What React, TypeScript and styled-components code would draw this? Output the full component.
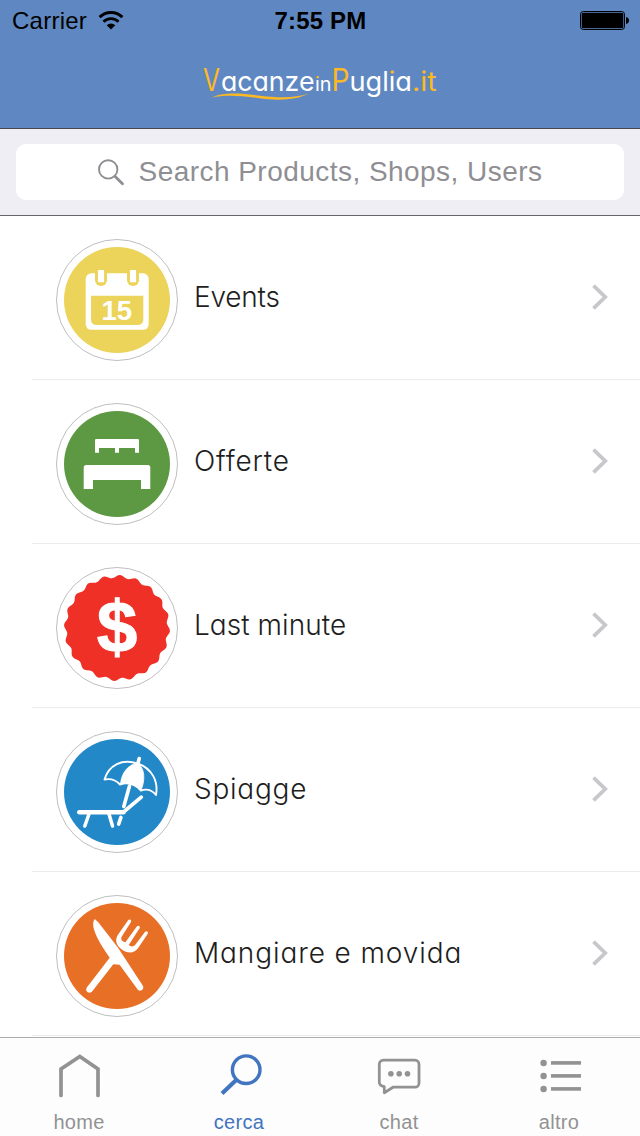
import React from 'react';
import styled, { createGlobalStyle } from 'styled-components';

const GlobalStyle = createGlobalStyle`
  * { box-sizing: border-box; }
  body { margin: 0; background: #fff; font-family: "Liberation Sans", Arial, sans-serif; }
  svg { display: block; flex: none; overflow: visible; }
`;

const Screen = styled.div`
  width: 640px;
  height: 1136px;
  display: flex;
  flex-direction: column;
  background: #fff;
  overflow: hidden;
`;

const Header = styled.header`
  height: 129px;
  background: #5f88c2;
  border-bottom: 1px solid #47484c;
`;

const StatusBar = styled.div`
  height: 40px;
  display: grid;
  grid-template-columns: 1fr auto 1fr;
  align-items: center;
  padding: 1px 11px 0 12px;
  font-size: 24px;
  color: #000;
`;

const Carrier = styled.div`
  display: flex;
  align-items: center;
  gap: 10.5px;
  letter-spacing: 0.25px;
`;

const Clock = styled.div`
  font-weight: 700;
  letter-spacing: 0.15px;
`;

const BatterySlot = styled.div`
  display: flex;
  justify-content: flex-end;
`;

const Brand = styled.div`
  display: flex;
  justify-content: center;
  padding-top: 20px;
`;

const LogoSvg = styled.svg`
  font-family: Inter, sans-serif;
  font-feature-settings: "cv11" 1;
`;

const SearchArea = styled.div`
  height: 87px;
  padding: 15px 16px;
  background: #efeef4;
  border-bottom: 1px solid #66656b;
`;

const SearchField = styled.div`
  height: 56px;
  border-radius: 10px;
  background: #fff;
  display: flex;
  align-items: center;
  justify-content: center;
  gap: 14px;
  color: #8e8e93;
  font-size: 28px;
  line-height: 32px;
  letter-spacing: 0.46px;
`;

const List = styled.main`
  height: 821px;
`;

const Row = styled.div`
  height: 164px;
  margin-left: 32px;
  padding: 23px 32px 0 24px;
  border-bottom: 1px solid #ececee;
  display: flex;
  align-items: flex-start;
`;

const Label = styled.div<{ $spacing: number }>`
  flex: 1;
  margin: 41px 0 0 16px;
  font-family: Inter, "Liberation Sans", sans-serif;
  font-size: 28px;
  line-height: 34px;
  font-weight: 300;
  font-feature-settings: "cv11" 1;
  letter-spacing: ${(p) => p.$spacing}px;
  color: #1e1e1e;
`;

const ChevronSlot = styled.div`
  padding-top: 45px;
`;

const TabBar = styled.nav`
  height: 99px;
  border-top: 1px solid #adadad;
  background: #fdfdfd;
  display: grid;
  grid-template-columns: repeat(4, 160px);
`;

const Tab = styled.div<{ $active?: boolean }>`
  display: flex;
  flex-direction: column;
  align-items: center;
  padding-top: 14px;
  gap: 10px;
  padding-right: 2px;
  font-size: 20px;
  line-height: 24px;
  letter-spacing: 0.3px;
  color: ${(p) => (p.$active ? '#4275c0' : '#929292')};
`;

const Wifi = () => (
  <svg width="26" height="19" viewBox="0 0 26 19" fill="none" stroke="#000">
    <path d="M1.6 6.1a16.2 16.2 0 0 1 22.8 0" strokeWidth="3" />
    <path d="M5.5 10.7a10.6 10.6 0 0 1 15 0" strokeWidth="2.9" />
    <path d="M13 18.6l-4.3-4.3a6 6 0 0 1 8.6 0z" fill="#000" stroke="none" />
  </svg>
);

const Battery = () => (
  <svg width="49" height="19" viewBox="0 0 49 19">
    <rect x="0.5" y="0.5" width="44" height="18" rx="2.8" fill="none" stroke="#000" />
    <rect x="1.7" y="1.7" width="41.6" height="15.6" rx="1.5" />
    <path d="M46 6c2 .4 3 1.7 3 3.5s-1 3.1-3 3.5z" />
  </svg>
);

const GOLD = '#fdb924';

const Logo = () => (
  <LogoSvg width="240" height="44" viewBox="200 60 240 44">
    <defs>
      <linearGradient id="dotSmall" gradientUnits="userSpaceOnUse" x1="0" x2="0" y1="70" y2="90">
        <stop offset="0.48" stopColor={GOLD} />
        <stop offset="0.48" stopColor="#fff" />
      </linearGradient>
      <linearGradient id="dotLarge" gradientUnits="userSpaceOnUse" x1="0" x2="0" y1="70" y2="90">
        <stop offset="0.27" stopColor={GOLD} />
        <stop offset="0.27" stopColor="#fff" />
      </linearGradient>
    </defs>
    <g fill="#fff" fontSize="27">
      <text x="203" y="91" fill={GOLD} fontSize="30.5" textLength="17" lengthAdjust="spacingAndGlyphs">V</text>
      <text x="221" y="91" textLength="93.5" lengthAdjust="spacingAndGlyphs">acanze</text>
      <text x="315" y="91" fontSize="19" textLength="16.5" lengthAdjust="spacingAndGlyphs">
        <tspan fill="url(#dotSmall)">i</tspan>n
      </text>
      <text x="331.5" y="91" fill={GOLD} fontSize="30.5" textLength="18" lengthAdjust="spacingAndGlyphs">P</text>
      <text x="349.5" y="91" textLength="62.5" lengthAdjust="spacingAndGlyphs">
        ugl<tspan fill="url(#dotLarge)">i</tspan>a
      </text>
      <text x="412" y="91" fill={GOLD} textLength="24.5" lengthAdjust="spacingAndGlyphs">.it</text>
    </g>
    <path d="M211.5 97.8C222 92 240 93.2 258 95.4S294 98.8 309 93.6C295 100.8 276 100.6 258 98.1S224 94.5 211.5 97.8z" fill={GOLD} />
  </LogoSvg>
);

const SearchGlyph = () => (
  <svg width="27" height="27" viewBox="0 0 27 27" fill="none" stroke="#8e8e93">
    <circle cx="10.2" cy="10.4" r="9.2" strokeWidth="1.9" />
    <path d="M16.9 17.3l7.6 7.5" strokeWidth="2.8" strokeLinecap="round" />
  </svg>
);

const Chevron = () => (
  <svg width="16" height="26" viewBox="0 0 16 26" fill="none" stroke="#c7c7cc" strokeWidth="3.8">
    <path d="M1.5 1.7L13.2 13 1.5 24.3" />
  </svg>
);

/* Circular medallion shared by every category. */
const Medal = ({ fill, children }: { fill?: string; children: React.ReactNode }) => (
  <svg width="122" height="122" viewBox="0 0 122 122">
    <circle cx="61" cy="61" r="60.5" fill="#fff" stroke="#adadad" strokeWidth="0.8" />
    {fill && <circle cx="61" cy="61" r="53" fill={fill} />}
    {children}
  </svg>
);

const EventsIcon = () => (
  <Medal fill="#ecd35a">
    <rect x="29.7" y="34.3" width="63" height="56.5" rx="5.5" fill="#fff" />
    <path d="M35 56.7h52.3v24.3a5 5 0 0 1-5 5H40a5 5 0 0 1-5-5z" fill="#ecd35a" />
    {[45, 77].map((x) => (
      <g key={x}>
        <path d={`M${x - 6} 32v9a6 6 0 0 0 12 0v-9z`} fill="#ecd35a" />
        <rect x={x - 3.1} y="31" width="6.2" height="12.2" rx="0.6" fill="#fff" />
      </g>
    ))}
    <text x="60.7" y="81" textAnchor="middle" fontFamily="Liberation Sans, sans-serif" fontWeight="700" fontSize="27.5" fill="#fff">15</text>
  </Medal>
);

const BedIcon = () => (
  <Medal fill="#5c9942">
    <g fill="#fff">
      <path d="M39 49.7V37.2a1.2 1.2 0 0 1 1.2-1.2h41.6a1.2 1.2 0 0 1 1.2 1.2v12.5h-4V45H63v4.7h-4V45H43v4.7z" />
      <path d="M27.7 86V64.5a2.5 2.5 0 0 1 2.5-2.5h61.6a2.5 2.5 0 0 1 2.5 2.5V86H85v-9H37v9z" />
    </g>
  </Medal>
);

const sealPoints = Array.from({ length: 240 }, (_, i) => {
  const a = (i / 240) * Math.PI * 2;
  const r = 51.5 + 1.5 * Math.cos(20 * (a - 0.056));
  return `${(61 + r * Math.sin(a)).toFixed(2)},${(61 - r * Math.cos(a)).toFixed(2)}`;
}).join(' ');

const SealIcon = () => (
  <Medal>
    <polygon points={sealPoints} fill="#ee3026" />
    <text
      x="61"
      y="84.8"
      textAnchor="middle"
      fontFamily="Liberation Sans, sans-serif"
      fontWeight="700"
      fontSize="73"
      fill="#fff"
      stroke="#fff"
      strokeWidth="1"
    >
      $
    </text>
  </Medal>
);

const BeachIcon = () => (
  <Medal fill="#2388c8">
    <g fill="none" stroke="#fff" strokeLinecap="round" strokeLinejoin="round">
      <path d="M83.2 27.5L81.5 34" strokeWidth="3.6" />
      <path d="M73.5 55L67.8 75.5" strokeWidth="3.6" />
      <path d="M64.9 86.5L62.7 93" strokeWidth="3.7" />
      <path d="M48.5 48.5C53 34 66 27.5 81.5 32.5 96 37.5 102.5 50 100 64 96 59 91 57.5 85 59.5 79 53 71 51 64 53.5 59 48 54 47.5 48.5 48.5z" strokeWidth="1.9" />
      <path d="M64.5 53C65.5 42 72 33.5 81 32.5 89 36 89.5 49 85 59.5 79 53 71 51 64.5 53z" fill="#fff" strokeWidth="0.8" />
      <path d="M23.3 81.2H67.5" strokeWidth="4.5" />
      <path d="M67.5 81L85.3 66.2" strokeWidth="3.7" />
      <path d="M33 83L28.8 95M53 83L56.5 95" strokeWidth="3.5" />
    </g>
  </Medal>
);

const CutleryIcon = () => (
  <Medal fill="#e86f26">
    <g fill="#fff">
      <path d="M38.8 24C36.8 26 36.8 31 38.3 35.5 41.5 45 47.5 53.5 53.7 62.8L31 92.3c-2.8 3.6 2.3 7.7 5.3 4L57.3 69.2l6.3.6 17.7 24.3c2.6 3.6 7.8.3 5.4-3.5L61.7 52.3 42.3 27.3z" />
      <path d="M72.3 25L61.6 40.2C58.6 45.5 60.5 50.5 65.5 54.2 71.5 58.8 78.5 58.5 82 53.3L91.6 39A1.7 1.7 0 0 0 88.9 36.9L79.3 49.8C77.5 52 74.5 51.8 72.7 50L83.8 33A1.7 1.7 0 0 0 81 31.2L69.4 47.3C66.5 46.8 64.5 44.5 65.5 42L75 27A1.7 1.7 0 0 0 72.3 25z" />
    </g>
  </Medal>
);

const HomeIcon = () => (
  <svg width="44" height="48" viewBox="0 0 44 48" fill="none" stroke="#929292" strokeWidth="3.7" strokeLinecap="round">
    <path d="M4 43.5V17L22.8 4.500 41 17V43.5" />
  </svg>
);

const CercaIcon = () => (
  <svg width="44" height="48" viewBox="0 0 44 48" fill="none" stroke="#4275c0">
    <circle cx="29.2" cy="17.7" r="13.8" strokeWidth="3.4" />
    <path d="M19.2 28L5 41.5" strokeWidth="4.2" />
  </svg>
);

const ChatIcon = () => (
  <svg width="44" height="48" viewBox="0 0 44 48" fill="none" stroke="#929292" strokeWidth="2.8" strokeLinejoin="round">
    <path d="M6.3 8.2H38a4 4 0 0 1 4 4V31.2a4 4 0 0 1-4 4H16L7.3 40.7V34.7C4.3 34.2 2.3 33 2.3 30V12.2a4 4 0 0 1 4-4z" />
    <g fill="#929292" stroke="none">
      <circle cx="13.9" cy="21.7" r="2.8" />
      <circle cx="22.2" cy="21.7" r="2.8" />
      <circle cx="30.5" cy="21.7" r="2.8" />
    </g>
  </svg>
);

const AltroIcon = () => (
  <svg width="44" height="48" viewBox="0 0 44 48" fill="#929292">
    {[11, 24, 37].map((y) => (
      <g key={y}>
        <circle cx="6.6" cy={y} r="3.2" />
        <rect x="14" y={y - 1.9} width="30" height="3.6" />
      </g>
    ))}
  </svg>
);

const categories = [
  { label: 'Events', icon: <EventsIcon />, spacing: -0.2 },
  { label: 'Offerte', icon: <BedIcon />, spacing: 0.8 },
  { label: 'Last minute', icon: <SealIcon />, spacing: 0.05 },
  { label: 'Spiagge', icon: <BeachIcon />, spacing: 0.75 },
  { label: 'Mangiare e movida', icon: <CutleryIcon />, spacing: 0.9 },
];

const tabs = [
  { label: 'home', icon: <HomeIcon /> },
  { label: 'cerca', icon: <CercaIcon />, active: true },
  { label: 'chat', icon: <ChatIcon /> },
  { label: 'altro', icon: <AltroIcon /> },
];

export default function App() {
  return (
    <Screen>
      <GlobalStyle />
      <Header>
        <StatusBar>
          <Carrier>Carrier<Wifi /></Carrier>
          <Clock>7:55 PM</Clock>
          <BatterySlot><Battery /></BatterySlot>
        </StatusBar>
        <Brand><Logo /></Brand>
      </Header>
      <SearchArea>
        <SearchField><SearchGlyph />Search Products, Shops, Users</SearchField>
      </SearchArea>
      <List>
        {categories.map((c) => (
          <Row key={c.label}>
            {c.icon}
            <Label $spacing={c.spacing}>{c.label}</Label>
            <ChevronSlot><Chevron /></ChevronSlot>
          </Row>
        ))}
      </List>
      <TabBar>
        {tabs.map((t) => (
          <Tab key={t.label} $active={t.active}>{t.icon}{t.label}</Tab>
        ))}
      </TabBar>
    </Screen>
  );
}
